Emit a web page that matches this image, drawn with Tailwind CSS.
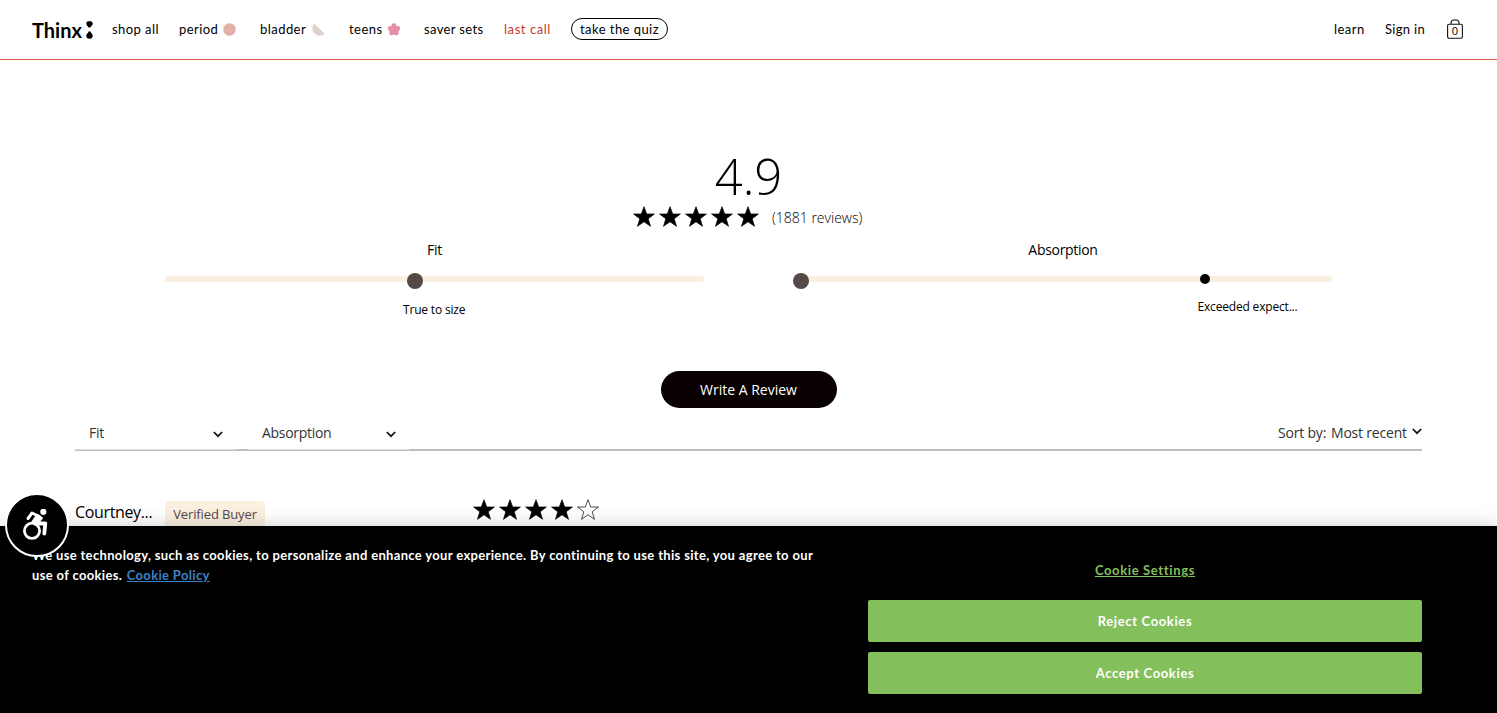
<!DOCTYPE html>
<html lang="en">
<head>
<meta charset="utf-8">
<title>Thinx reviews</title>
<script src="https://cdn.jsdelivr.net/npm/@tailwindcss/browser@4"></script>
</head>
<body class="bg-white text-black font-['Open_Sans','Noto_Sans',sans-serif]">
<svg class="hidden"><defs><path id="star" d="M11 .7l2.700 7.300h7.700l-6.200 4.800 2.300 7.500-6.500-4.500-6.500 4.500 2.300-7.500L.6 8h7.700z"/></defs></svg>
<div class="relative w-full h-[713px] overflow-hidden">
  <header class="h-[60px] border-b border-[#e05a4b] flex items-center pl-8 pr-[34px] font-['Lato',sans-serif] text-[13px] tracking-[0.45px] whitespace-nowrap">
    <div class="w-20 flex items-center gap-1">
      <span class="w-[50px] text-[20px] font-bold tracking-[0px]">Thinx</span>
      <svg class="w-[7px] h-[18px]" viewBox="0 0 7 18"><path d="M.3 2.800C.3 1.200 1.200.3 2 .3h3c.8 0 1.700.9 1.700 2.500C6.700 4.800 4.800 5 4.500 6.500h-2C2.200 5 .3 4.800.3 2.800zM2.500 10.500h2C4.800 12.500 6.700 12.500 6.700 14.700a3.200 3 0 0 1-6.400 0c0-2.200 1.900-2.200 2.200-4.200z"/></svg>
    </div>
    <a class="w-[67px] pt-px">shop all</a>
    <a class="w-[81px] flex items-center"><span class="w-11 pt-px">period</span><svg class="size-[13px]" viewBox="0 0 13 13"><circle cx="6.500" cy="6.500" r="6.200" fill="#e3afa8"/></svg></a>
    <a class="w-[89px] flex items-center"><span class="w-[52px] pt-px">bladder</span><svg class="size-[13px]" viewBox="0 0 13 13"><path d="M2 .3L12.700 10.800C9.500 13.500 5 13.200 2.400 10.300-.2 7.500-.3 3.500 2 .3z" fill="#e2d1c8"/></svg></a>
    <a class="w-[75px] flex items-center"><span class="w-[38px] pt-px">teens</span><svg class="w-[14px] h-[13px]" viewBox="0 0 13 13" fill="#e58fa8"><circle cx="6.500" cy="2.700" r="2.400"/><circle cx="10.300" cy="5.500" r="2.400"/><circle cx="8.900" cy="10.100" r="2.400"/><circle cx="4.100" cy="10.100" r="2.400"/><circle cx="2.700" cy="5.500" r="2.400"/><path d="M6.500 1.500L11.300 5.200 9.600 11H3.400L1.700 5.200z" stroke="#e58fa8"/></svg></a>
    <a class="w-20 pt-px tracking-[0.35px]">saver sets</a>
    <a class="w-[67px] pt-px tracking-[0.55px] text-[#c8382f]">last call</a>
    <a class="w-[97px] h-[22px] -mt-px pt-px border border-black rounded-full flex items-center justify-center">take the quiz</a>
    <div class="flex-1"></div>
    <a class="w-[51px] pt-px">learn</a>
    <a class="w-[62px] pt-px tracking-[0.3px]">Sign in</a>
    <div class="w-4 h-5 relative -mt-[2px]">
      <svg class="w-4 h-5" viewBox="0 0 16 20" fill="none" stroke="#111" stroke-width="1.100"><rect x=".6" y="5.200" width="14.800" height="14" rx="1.500"/><path d="M4 5V4A3 3 0 0 1 7 1h2a3 3 0 0 1 3 3v1"/></svg>
      <span class="absolute left-0 top-[5px] w-4 text-center font-['Open_Sans',sans-serif] text-[11px] leading-[14px] tracking-normal">0</span>
    </div>
  </header>

  <main class="whitespace-nowrap">
    <div class="h-[64px] mt-[84px] flex justify-center text-[49px] leading-[64px] font-light">4.9</div>
    <div class="h-[17px] flex items-center pl-[633px]">
      <div class="flex gap-1 w-[139px] shrink-0">
        <svg class="size-[22px]" viewBox="0 0 22 22" stroke="#000" stroke-width=".7"><use href="#star"/></svg><svg class="size-[22px]" viewBox="0 0 22 22" stroke="#000" stroke-width=".7"><use href="#star"/></svg><svg class="size-[22px]" viewBox="0 0 22 22" stroke="#000" stroke-width=".7"><use href="#star"/></svg><svg class="size-[22px]" viewBox="0 0 22 22" stroke="#000" stroke-width=".7"><use href="#star"/></svg><svg class="size-[22px]" viewBox="0 0 22 22" stroke="#000" stroke-width=".7"><use href="#star"/></svg>
      </div>
      <span class="text-[14px] font-light pt-[2px]">(1881 reviews)</span>
    </div>
    <section class="flex gap-[90px] pl-[165px] mt-[15px] h-[131px]">
      <div class="w-[539px]">
        <div class="text-center text-[14px] leading-5 tracking-[-0.3px]">Fit</div>
        <div class="relative mt-[16px] h-[6px] rounded-full bg-[#fbefdf]"><i class="absolute left-[242px] -top-[3px] size-4 rounded-full bg-[#544a47]"></i></div>
        <div class="mt-[18px] pl-[238px] text-[12px] leading-5 tracking-[-0.18px]">True to size</div>
      </div>
      <div class="w-[538px]">
        <div class="text-center text-[14px] leading-5 tracking-[-0.3px]">Absorption</div>
        <div class="relative mt-[16px] h-[6px] rounded-full bg-[#fbefdf]"><i class="absolute -left-px -top-[3px] size-4 rounded-full bg-[#544a47]"></i><i class="absolute left-[406px] -top-[2px] size-[10px] rounded-full bg-black"></i></div>
        <div class="mt-[15px] pl-[403.500px] text-[12px] leading-5 tracking-[-0.18px]">Exceeded expect...</div>
      </div>
    </section>
    <div class="flex justify-center"><button class="w-[176px] h-[37px] rounded-full bg-[#080001] text-white text-[14px]">Write A Review</button></div>
    <div class="ml-[75px] w-[1347px] mt-[6px] h-[37px] flex items-center border-b-2 border-[#bdbdbd] text-[14px] text-[#333]">
      <div class="w-[162px] mr-[11px] h-[36px] self-start pt-[2px] border-b border-[#dadada] pl-[14px] pr-[14px] flex items-center justify-between tracking-[-0.3px]">Fit<svg class="w-[10px] h-[7px] mt-1" viewBox="0 0 10 7" fill="none" stroke="#111" stroke-width="1.700"><path d="M.8 1L5 5.200 9.200 1"/></svg></div>
      <div class="w-[162px] mr-[11px] h-[36px] self-start pt-[2px] border-b border-[#dadada] pl-[14px] pr-[14px] flex items-center justify-between tracking-[-0.3px]">Absorption<svg class="w-[10px] h-[7px] mt-1" viewBox="0 0 10 7" fill="none" stroke="#111" stroke-width="1.700"><path d="M.8 1L5 5.200 9.200 1"/></svg></div>
      <div class="flex-1 flex justify-end items-center pt-[2px] tracking-[-0.2px]"><span class="w-[53px]">Sort by:</span><span class="w-[81px]">Most recent</span><svg class="w-[10px] h-[7px] -mt-[2px]" viewBox="0 0 10 7" fill="none" stroke="#111" stroke-width="1.700"><path d="M.8 1L5 5.200 9.200 1"/></svg></div>
    </div>
    <div class="flex ml-[75px] mt-[48px]">
      <div class="w-[90px] -mt-px text-[16px] leading-[28px] tracking-[-0.35px]">Courtney...</div>
      <div class="w-[308px]"><span class="inline-block w-[100px] h-[30px] mt-[2px] rounded-[5px] bg-[#fbefdf] text-center text-[13px] leading-[26px] tracking-[-0.12px] text-[#55484a]">Verified Buyer</span></div>
      <div class="flex gap-1">
        <svg class="size-[22px]" viewBox="0 0 22 22" stroke="#000" stroke-width=".7"><use href="#star"/></svg><svg class="size-[22px]" viewBox="0 0 22 22" stroke="#000" stroke-width=".7"><use href="#star"/></svg><svg class="size-[22px]" viewBox="0 0 22 22" stroke="#000" stroke-width=".7"><use href="#star"/></svg><svg class="size-[22px]" viewBox="0 0 22 22" stroke="#000" stroke-width=".7"><use href="#star"/></svg><svg class="size-[22px]" viewBox="0 0 22 22" fill="none" stroke="#222" stroke-width=".8"><use href="#star"/></svg>
      </div>
    </div>
  </main>

  <div class="absolute inset-x-0 bottom-0 h-[187px] bg-black text-white shadow-[0_0_18px_rgba(0,0,0,0.2)] flex pl-8 font-['Lato',sans-serif] font-bold text-[13px]">
    <div class="w-[836px] pt-[19px] leading-5 whitespace-nowrap tracking-[0.34px]">
      <p>We use technology, such as cookies, to personalize and enhance your experience. By continuing to use this site, you agree to our</p>
      <p>use of cookies. <a class="ml-px text-[#3b83c4] underline">Cookie Policy</a></p>
    </div>
    <div class="w-[554px] pt-[34px] flex flex-col text-center tracking-[0.64px]">
      <a class="text-[#83bf5b] underline leading-5">Cookie Settings</a>
      <button class="mt-5 h-[42px] pt-[2px] rounded-[2px] bg-[#83bf5b]">Reject Cookies</button>
      <button class="mt-[10px] h-[42px] pt-[2px] rounded-[2px] bg-[#83bf5b]">Accept Cookies</button>
    </div>
  </div>

  <div class="absolute left-[5px] top-[493px] size-[64px] rounded-full bg-black border-2 border-white flex items-center justify-center">
    <svg class="w-[28px] h-[32px]" viewBox="0 0 28 32" fill="none" stroke="#fff"><circle cx="20.300" cy="2.800" r="3.100" fill="#fff" stroke="none"/><path d="M5 9.500L9 4l7.500 3.500" stroke-width="3" stroke-linejoin="round" stroke-linecap="round"/><path d="M14 6l5 3-5 6.500-5-2z" fill="#fff" stroke-width="2" stroke-linejoin="round"/><path d="M12 14.500h10.300l-1 10" stroke-width="3.800" stroke-linejoin="round" stroke-linecap="round"/><circle cx="9" cy="21.800" r="7.600" stroke-width="2.800"/></svg>
  </div>
</div>
</body>
</html>
